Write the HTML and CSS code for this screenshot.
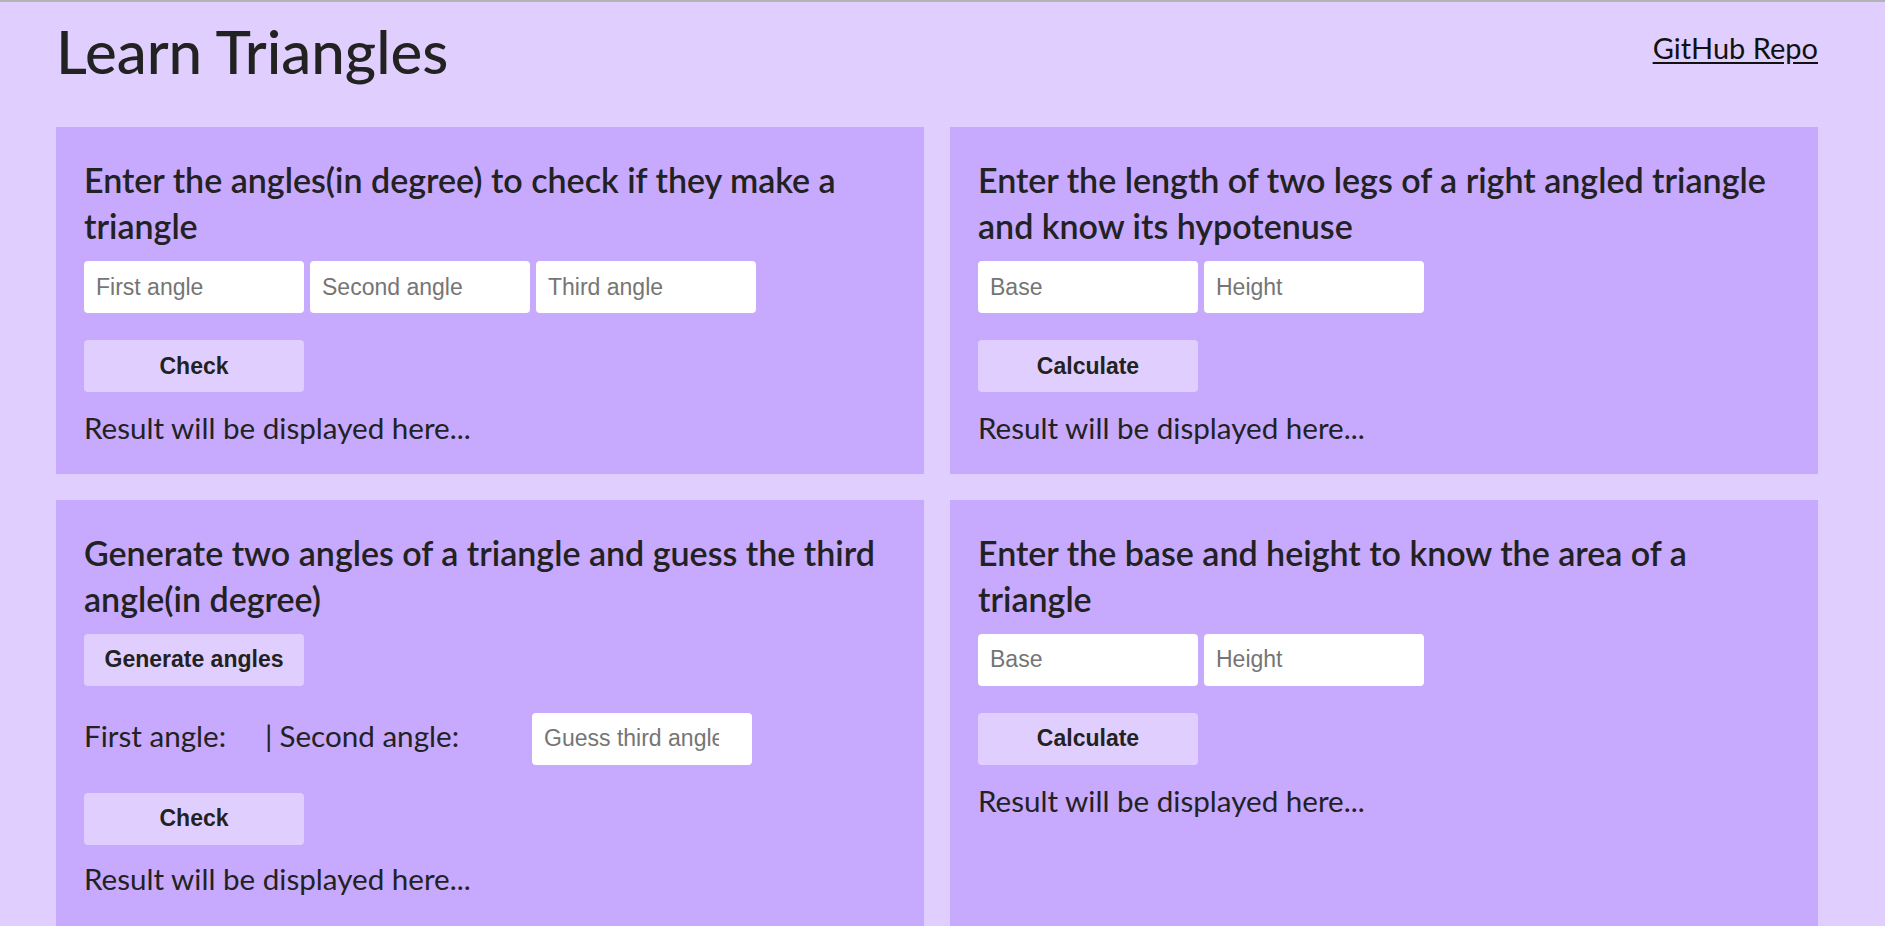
FILE: index.html
```html
<!DOCTYPE html>
<html lang="en">
<head>
<meta charset="utf-8">
<title>Learn Triangles</title>
<link rel="stylesheet" href="styles.css">
</head>
<body>
<div class="page">
  <header class="header">
    <h1 class="title">Learn Triangles</h1>
    <a class="repo-link" href="#">GitHub Repo</a>
  </header>
  <main class="grid">
    <section class="card">
      <h2 class="card-title">Enter the angles(in degree) to check if they make a triangle</h2>
      <div class="inputs">
        <input class="field" type="number" placeholder="First angle">
        <input class="field" type="number" placeholder="Second angle">
        <input class="field" type="number" placeholder="Third angle">
      </div>
      <button class="btn btn-gap">Check</button>
      <p class="result">Result will be displayed here...</p>
    </section>
    <section class="card">
      <h2 class="card-title">Enter the length of two legs of a right angled triangle and know its hypotenuse</h2>
      <div class="inputs">
        <input class="field" type="number" placeholder="Base">
        <input class="field" type="number" placeholder="Height">
      </div>
      <button class="btn btn-gap">Calculate</button>
      <p class="result">Result will be displayed here...</p>
    </section>
    <section class="card card-quiz">
      <h2 class="card-title">Generate two angles of a triangle and guess the third angle(in degree)</h2>
      <button class="btn">Generate angles</button>
      <div class="quiz-row">
        <span class="quiz-label">First angle:</span>
        <span class="quiz-label quiz-sep">|</span>
        <span class="quiz-label">Second angle:</span>
        <input class="field quiz-field" type="number" placeholder="Guess third angle">
      </div>
      <button class="btn btn-gap-quiz">Check</button>
      <p class="result result-quiz">Result will be displayed here...</p>
    </section>
    <section class="card">
      <h2 class="card-title">Enter the base and height to know the area of a triangle</h2>
      <div class="inputs">
        <input class="field" type="number" placeholder="Base">
        <input class="field" type="number" placeholder="Height">
      </div>
      <button class="btn btn-gap">Calculate</button>
      <p class="result">Result will be displayed here...</p>
    </section>
  </main>
</div>
</body>
</html>
```

FILE: styles.css
```css
html, body {
  margin: 0;
  padding: 0;
}

body {
  background: #e0cffe;
  border-top: 2px solid #b3b3b3;
  font-family: Lato, "Liberation Sans", sans-serif;
  color: #222222;
  overflow: hidden;
}

.page {
  padding: 0 67px 0 56px;
}

.header {
  display: flex;
  justify-content: space-between;
  align-items: center;
  height: 99px;
}

.title {
  margin: 0 0 2px 0;
  font-size: 60px;
  font-weight: 500;
  line-height: 1.2;
  color: #222222;
}

.repo-link {
  font-size: 29px;
  color: #111111;
  text-decoration: underline;
  text-underline-offset: 3px;
  margin-bottom: 8px;
}

.grid {
  margin-top: 26px;
  display: grid;
  grid-template-columns: 1fr 1fr;
  gap: 26px;
}

.card {
  background: #c7a9fd;
  padding: 30px 28px 28px 28px;
  display: flex;
  flex-direction: column;
  align-items: flex-start;
}

.card-quiz {
  padding-bottom: 40px;
}

.card-title {
  margin: 0;
  font-size: 34px;
  font-weight: 600;
  line-height: 46px;
  color: #222222;
}

.inputs {
  display: flex;
  gap: 6px;
  margin-top: 12px;
}

.field {
  box-sizing: border-box;
  width: 220px;
  height: 52px;
  border: none;
  border-radius: 4px;
  background: #ffffff;
  padding: 0 18px 0 12px;
  font-family: "Liberation Sans", Arial, sans-serif;
  font-size: 23px;
  color: #222222;
  outline: none;
}

.field::placeholder {
  color: #757575;
}

.btn {
  box-sizing: border-box;
  width: 220px;
  height: 52px;
  border: none;
  border-radius: 4px;
  background: #e0cffe;
  font-family: "Liberation Sans", Arial, sans-serif;
  font-size: 23px;
  font-weight: 700;
  color: #222222;
  margin-top: 12px;
  padding: 0;
}

.btn-gap {
  margin-top: 27px;
}

.btn-gap-quiz {
  margin-top: 28px;
}

.result {
  margin: 18px 0 0 0;
  font-size: 29.6px;
  line-height: 1.2;
}

.result-quiz {
  margin-top: 16px;
}

.quiz-row {
  display: flex;
  align-items: center;
  margin-top: 27px;
  font-size: 29.6px;
}

.quiz-label {
  margin-bottom: 6px;
}

.quiz-sep {
  margin-left: 39px;
  margin-right: 7px;
}

.quiz-field {
  margin-left: 73px;
}
```
